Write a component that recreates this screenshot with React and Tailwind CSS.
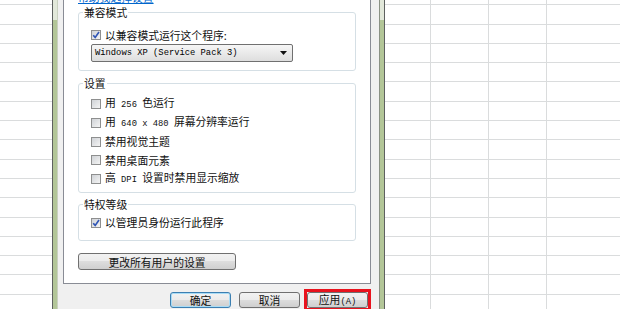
import React from "react";

const rows = Array.from({ length: 17 }, (_, i) => i);

function Check({ checked }) {
  return (
    <span className="flex h-[10px] w-[10px] shrink-0 items-center justify-center border border-[#8e8f8f] bg-[linear-gradient(135deg,#cfd2d6,#f4f4f4)]">
      {checked && (
        <svg width="8" height="8" viewBox="0 0 8 8">
          <path d="M1.2 4.2 L3.2 6.4 L7 1" fill="none" stroke="#2f55b5" strokeWidth="1.6" />
        </svg>
      )}
    </span>
  );
}

function Mono({ children }) {
  return <span className="font-['Liberation_Mono',monospace] text-[8.8px]">{children}</span>;
}

function Row({ checked, children, h = "h-[18.7px]" }) {
  return (
    <div className={`flex ${h} items-center gap-[4px]`}>
      <Check checked={checked} />
      <span className="whitespace-pre leading-[13px]">{children}</span>
    </div>
  );
}

function Group({ title, className, children }) {
  return (
    <div className={`relative rounded-[3px] border border-[#d5dfe5] pl-[12px] ${className}`}>
      <span className="absolute -top-[7px] left-[4px] bg-white px-[1px] leading-[13px] text-[#111]">
        {title}
      </span>
      {children}
    </div>
  );
}

const btn =
  "flex items-center justify-center rounded-[3px] border leading-[14px] bg-[linear-gradient(to_bottom,#f2f2f2_0%,#ebebeb_50%,#dddddd_50%,#cfcfcf_100%)]";

function Sheet({ cols }) {
  return (
    <div className="-mt-[14px] flex flex-col">
      {rows.map((r) => (
        <div key={r} className="flex h-[19.3px] shrink-0">
          {cols.map((w, i) => (
            <div
              key={i}
              className={`h-full border-b border-[#dadcdd] ${w} ${i < cols.length - 1 ? "border-r" : ""}`}
            />
          ))}
        </div>
      ))}
    </div>
  );
}

export default function App() {
  return (
    <div className="flex h-[309px] w-[620px] overflow-hidden bg-white font-['Noto_Sans_CJK_SC',sans-serif] text-[10.8px] text-[#111]">
      {/* left sheet */}
      <div className="w-[52px] shrink-0 overflow-hidden">
        <Sheet cols={["w-[52px]"]} />
      </div>

      {/* left frame */}
      <div className="w-[1px] shrink-0 bg-[#5e6160]" />
      <div className="flex w-[5px] shrink-0 flex-col border-r border-[#c9d1c0]">
        <div className="h-[20px] bg-[#e2e8da]" />
        <div className="flex-1 bg-[#b3c698]" />
      </div>

      {/* dialog body */}
      <div className="flex w-[321px] shrink-0 flex-col bg-[#f0f0f0] pl-[5px] pr-[8px]">
        <div className="flex h-[284px] w-[308px] shrink-0 flex-col overflow-hidden border-x border-b border-[#898c95] bg-white px-[14px]">
          <div className="-mt-[9px] h-[13px] leading-[12px] text-[#0066cc] underline">帮助我选择设置</div>

          <Group title="兼容模式" className="mt-[8px] h-[59px] pt-[16px]">
            <Row checked h="h-[12px]">以兼容模式运行这个程序:</Row>
            <div className="mt-[3px] flex h-[18px] w-[202px] items-center justify-between rounded-[2px] border border-[#707070] bg-[linear-gradient(to_bottom,#f6f6f6,#dedede)] pl-[3px] pr-[5px]">
              <span className="whitespace-pre font-['Liberation_Mono',monospace] text-[8.8px] leading-[12px] text-black">
                Windows XP (Service Pack 3)
              </span>
              <svg width="7" height="4" viewBox="0 0 7 4">
                <path d="M0 0 H7 L3.5 4 Z" fill="#111" />
              </svg>
            </div>
          </Group>

          <Group title="设置" className="mt-[12px] h-[110px] pt-[11px]">
            <Row>
              用<Mono> 256 </Mono>色运行
            </Row>
            <Row>
              用<Mono> 640 x 480 </Mono>屏幕分辨率运行
            </Row>
            <Row>禁用视觉主题</Row>
            <Row>禁用桌面元素</Row>
            <Row>
              高<Mono> DPI </Mono>设置时禁用显示缩放
            </Row>
          </Group>

          <Group title="特权等级" className="mt-[11px] h-[37px] pt-[8px]">
            <Row checked h="h-[19px]">以管理员身份运行此程序</Row>
          </Group>

          <div className={`${btn} mt-[12px] h-[17px] w-[158px] shrink-0 border-[#707070]`}>更改所有用户的设置</div>
        </div>

        <div className="flex items-start pl-[107px] pt-[8px]">
          <div className={`${btn} h-[16px] w-[64px] border-[#3c7fb1] shadow-[inset_0_0_0_1px_#a8dcf6]`}>确定</div>
          <div className={`${btn} ml-[8px] h-[16px] w-[64px] border-[#707070]`}>取消</div>
          <div className="-mt-[3px] ml-[4px] border-[3px] border-[#e8131e]">
            <div className={`${btn} h-[16px] w-[61px] border-[#707070]`}>
              <span className="whitespace-pre">
                应用<Mono>(A)</Mono>
              </span>
            </div>
          </div>
        </div>
      </div>

      {/* right frame */}
      <div className="flex w-[5px] shrink-0 flex-col border-l border-[#8a9184]">
        <div className="h-[20px] bg-[#e2e8da]" />
        <div className="flex-1 bg-[#b3c698]" />
      </div>
      <div className="w-[1px] shrink-0 bg-[#5e6160]" />

      {/* right sheet */}
      <div className="flex-1 overflow-hidden">
        <Sheet cols={["w-[51px]", "w-[63px]", "w-[64px]", "w-[80px]"]} />
      </div>
    </div>
  );
}
